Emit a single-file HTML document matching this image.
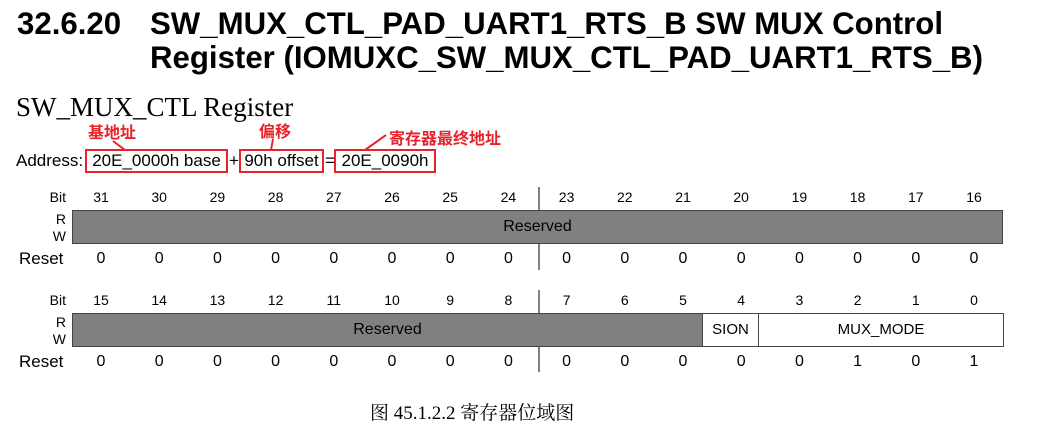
<!DOCTYPE html>
<html><head><meta charset="utf-8"><style>
body{margin:0;width:1047px;height:429px;background:#fff;position:relative;overflow:hidden;font-family:"Liberation Sans",sans-serif;color:#000}
.a{position:absolute;white-space:nowrap}
.h{font-weight:bold;font-size:31.2px;line-height:32px}
.n{font-size:14px;width:58px;text-align:center}
.z{font-size:16px;width:58px;text-align:center}
.red{color:#e8222a;font-weight:bold;font-size:16px;font-family:"Liberation Sans","Noto Sans CJK SC",sans-serif}
.box{position:absolute;border:2px solid #e8222a;box-sizing:border-box;font-size:17px;line-height:20px;text-align:center}
.lab{font-size:14px;text-align:right;width:50px}
.ad{font-size:17px}
</style></head><body>
<div class="a h" style="left:17px;top:8px">32.6.20</div>
<div class="a h" style="left:150px;top:8px">SW_MUX_CTL_PAD_UART1_RTS_B SW MUX Control</div>
<div class="a h" style="left:150px;top:42px">Register (IOMUXC_SW_MUX_CTL_PAD_UART1_RTS_B)</div>
<div class="a" style="left:16px;top:92px;font-family:'Liberation Serif',serif;font-size:27px;line-height:30px">SW_MUX_CTL Register</div>

<div class="a red" style="left:88px;top:119px">基地址</div>
<div class="a red" style="left:259px;top:118px">偏移</div>
<div class="a red" style="left:389px;top:125px">寄存器最终地址</div>
<svg class="a" style="left:0;top:0" width="1047" height="429"><g stroke="#e8222a" stroke-width="2"><line x1="113" y1="141" x2="125" y2="150"/><line x1="273" y1="139" x2="271" y2="150"/><line x1="386" y1="135" x2="365" y2="150"/></g>
<line x1="539" y1="187" x2="539" y2="270" stroke="#000" stroke-width="1"/>
<line x1="539" y1="290" x2="539" y2="372" stroke="#000" stroke-width="1"/></svg>
<div class="a ad" style="left:16px;top:151px">Address:</div>
<div class="box" style="left:85px;top:149px;width:143px;height:24px">20E_0000h base</div>
<div class="a ad" style="left:229px;top:151px">+</div>
<div class="box" style="left:239px;top:149px;width:85px;height:24px">90h offset</div>
<div class="a ad" style="left:325px;top:151px">=</div>
<div class="box" style="left:334px;top:149px;width:102px;height:24px">20E_0090h</div>

<div class="a lab" style="left:16px;top:189px">Bit</div>
<div class="a lab" style="left:16px;top:211px">R</div>
<div class="a lab" style="left:16px;top:228px">W</div>
<div class="a" style="left:19px;top:249px;font-size:17px">Reset</div>
<div class="a" style="left:72px;top:210px;width:931px;height:34px;background:#808080;border:1px solid #444;box-sizing:border-box;text-align:center;line-height:32px;font-size:16px">Reserved</div>

<div class="a lab" style="left:16px;top:292px">Bit</div>
<div class="a lab" style="left:16px;top:314px">R</div>
<div class="a lab" style="left:16px;top:331px">W</div>
<div class="a" style="left:19px;top:352px;font-size:17px">Reset</div>
<div class="a" style="left:72px;top:313px;width:932px;height:34px;border:1px solid #444;box-sizing:border-box;background:#fff"></div>
<div class="a" style="left:72px;top:313px;width:631px;height:34px;background:#808080;border:1px solid #444;box-sizing:border-box;text-align:center;line-height:32px;font-size:16px">Reserved</div>
<div class="a" style="left:703px;top:313px;width:56px;height:34px;border:1px solid #444;border-left:none;box-sizing:border-box;text-align:center;line-height:32px;font-size:15px">SION</div>
<div class="a" style="left:758px;top:313px;width:246px;height:34px;text-align:center;line-height:34px;font-size:15px">MUX_MODE</div>

<div id="nums"></div>
<script>
var h='';
for(var i=0;i<16;i++){var x=72+i*58.2;
h+='<div class="a n" style="left:'+(x)+'px;top:189px">'+(31-i)+'</div>';
h+='<div class="a z" style="left:'+(x)+'px;top:250px">0</div>';
h+='<div class="a n" style="left:'+(x)+'px;top:292px">'+(15-i)+'</div>';
var r=[0,0,0,0,0,0,0,0,0,0,0,0,0,1,0,1][i];
h+='<div class="a z" style="left:'+(x)+'px;top:353px">'+r+'</div>';}
document.getElementById('nums').innerHTML=h;
</script>
<div class="a" style="left:370px;top:398px;font-size:19px;font-family:'Liberation Serif','Noto Serif CJK SC',serif">图 45.1.2.2 寄存器位域图</div>
</body></html>
